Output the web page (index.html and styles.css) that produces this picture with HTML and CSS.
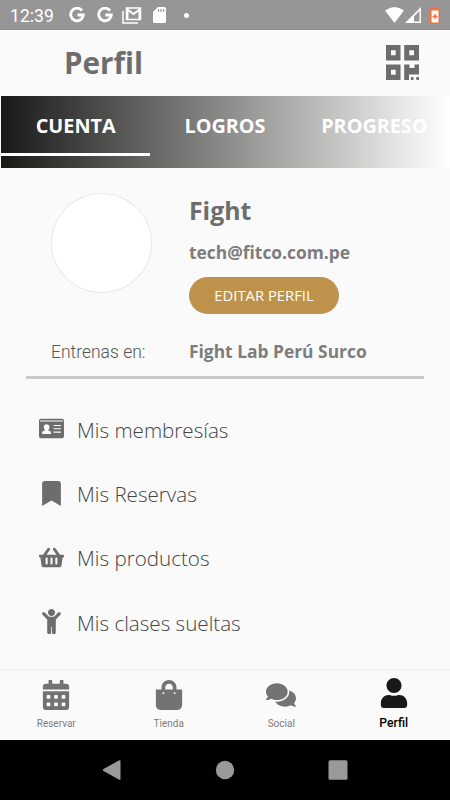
FILE: index.html
```html
<!DOCTYPE html>
<html lang="es">
<head>
	<meta charset="utf-8">
	<title>Perfil</title>
	<meta name="viewport" content="width=device-width, initial-scale=1">
	<link rel="stylesheet" href="styles.css">
</head>
<body>
	<div class="app">
		<div class="status">
			<span class="clock">12:39</span>
			<svg class="s_google" viewBox="0 0 16 16"><path d="M13 3.6A6.3 6.3 0 1 0 14.3 8H8.4" /></svg>
			<svg class="s_google" viewBox="0 0 16 16"><path d="M13 3.6A6.3 6.3 0 1 0 14.3 8H8.4" /></svg>
			<svg class="s_mail" viewBox="0 0 20 17">
				<path d="M1 4v12h15" />
				<path d="M4.500 1h14v11.500h-14z" />
				<path stroke-width="2" d="M5.500 12V2.500l6 4.500 6-4.500V12" />
			</svg>
			<svg class="s_card" viewBox="0 0 13 16"><path fill="#fff" d="M5 0h6.500Q13 0 13 1.500v13q0 1.500-1.500 1.500h-10Q0 16 0 14.500V5z" /><path stroke="#969696" stroke-width="1.200" d="M5.500 2v3M8 2v3M10.500 2v3" /></svg>
			<span class="s_dot"></span>
			<svg class="s_wifi" viewBox="0 0 19 16"><path fill="#fff" d="M0 3.500Q9.500-3.500 19 3.500L9.500 16z" /></svg>
			<svg class="s_signal" viewBox="0 0 16 16"><path fill="#fff" fill-rule="evenodd" d="M16 0v16H0zM14.500 4v10.500H9V9.300z" /></svg>
			<svg class="s_battery" viewBox="0 0 10 17"><path fill="#ff6b35" d="M3 0h4v1.500h3V17H0V1.500h3z" /><path fill="#fff" d="M1.500 3.500h7v12h-7z" /><path stroke="#ff6b35" stroke-width="1.500" d="M5 7v5M2.500 9.500h5" /></svg>
		</div>
		<div class="header">
			<h1>Perfil</h1>
			<svg class="qr" viewBox="0 0 33 35">
				<path fill-rule="evenodd" d="M0 0h14.500v15.500H0zM5 5.300v5h4.700v-5zM18.200 0H33v15.500H18.200zM23.300 5.300v5H28v-5zM0 19.500h14.500V35H0zM5 24.800v5h4.700v-5zM18.200 19.500h5.300v3.500h5v-3.500H33v10h-10V35h-4.800zM25 32h2.500v3H25zM30.300 32H33v3h-2.700z" />
			</svg>
		</div>
		<div class="tabs">
			<div class="tab active">CUENTA</div>
			<div class="tab">LOGROS</div>
			<div class="tab">PROGRESO</div>
		</div>
		<div class="profile">
			<div class="avatar"></div>
			<div class="info">
				<h2>Fight</h2>
				<p class="email">tech@fitco.com.pe</p>
				<button class="edit">EDITAR PERFIL</button>
			</div>
		</div>
		<div class="gym">
			<span class="gym_label">Entrenas en:</span>
			<span class="gym_name">Fight Lab Perú Surco</span>
		</div>
		<div class="menu">
			<div class="item">
				<svg viewBox="0 0 576 512"><path fill-rule="evenodd" d="M528 32H48C21.500 32 0 53.500 0 80v352c0 26.500 21.500 48 48 48h480c26.500 0 48-21.500 48-48V80c0-26.500-21.500-48-48-48zM24 72h528v22H24zM176 160c38 0 66 29 66 66 0 27-12 45-28 58v18c33 8 62 20 62 52v30H72v-30c0-32 29-44 64-52v-18c-16-13-26-31-26-58 0-37 28-66 66-66zM336 174h168v26H336zM336 250h168v26H336zM336 326h168v26H336z" /></svg>
				<span>Mis membresías</span>
			</div>
			<div class="item">
				<svg viewBox="0 0 384 512"><path d="M0 512V48C0 21.490 21.490 0 48 0h288c26.510 0 48 21.490 48 48v464L192 400 0 512z" /></svg>
				<span>Mis Reservas</span>
			</div>
			<div class="item">
				<svg viewBox="0 0 576 512"><path d="M576 216v16c0 13.255-10.745 24-24 24h-8l-26.113 182.788C514.509 462.435 494.257 480 470.370 480H105.630c-23.887 0-44.139-17.565-47.518-41.212L32 256h-8c-13.255 0-24-10.745-24-24v-16c0-13.255 10.745-24 24-24h67.341l106.780-146.821c10.395-14.292 30.407-17.453 44.701-7.058 14.293 10.395 17.453 30.408 7.058 44.701L170.477 192h235.046L326.120 82.821c-10.395-14.292-7.234-34.306 7.059-44.701 14.291-10.395 34.306-7.235 44.701 7.058L484.659 192H552c13.255 0 24 10.745 24 24zM312 392V280c0-13.255-10.745-24-24-24s-24 10.745-24 24v112c0 13.255 10.745 24 24 24s24-10.745 24-24zm112 0V280c0-13.255-10.745-24-24-24s-24 10.745-24 24v112c0 13.255 10.745 24 24 24s24-10.745 24-24zm-224 0V280c0-13.255-10.745-24-24-24s-24 10.745-24 24v112c0 13.255 10.745 24 24 24s24-10.745 24-24z" /></svg>
				<span>Mis productos</span>
			</div>
			<div class="item">
				<svg viewBox="0 0 384 512"><path d="M120 72c0-39.765 32.235-72 72-72s72 32.235 72 72c0 39.764-32.235 72-72 72s-72-32.236-72-72zm254.627 1.373c-12.496-12.497-32.758-12.497-45.254 0L242.745 160H141.254L54.627 73.373c-12.496-12.497-32.758-12.497-45.254 0-12.497 12.497-12.497 32.758 0 45.255L104 213.254V480c0 17.673 14.327 32 32 32h16c17.673 0 32-14.327 32-32V368h16v112c0 17.673 14.327 32 32 32h16c17.673 0 32-14.327 32-32V213.254l94.627-94.627c12.497-12.497 12.497-32.757 0-45.254z" /></svg>
				<span>Mis clases sueltas</span>
			</div>
		</div>
		<div class="navbar">
			<div class="nav">
				<svg viewBox="0 0 448 512"><path d="M0 464c0 26.500 21.500 48 48 48h352c26.500 0 48-21.500 48-48V192H0v272zm320-196c0-6.600 5.400-12 12-12h40c6.600 0 12 5.400 12 12v40c0 6.600-5.400 12-12 12h-40c-6.600 0-12-5.400-12-12v-40zm0 128c0-6.600 5.400-12 12-12h40c6.600 0 12 5.400 12 12v40c0 6.600-5.400 12-12 12h-40c-6.600 0-12-5.400-12-12v-40zM192 268c0-6.600 5.400-12 12-12h40c6.600 0 12 5.400 12 12v40c0 6.600-5.400 12-12 12h-40c-6.600 0-12-5.400-12-12v-40zm0 128c0-6.600 5.400-12 12-12h40c6.600 0 12 5.400 12 12v40c0 6.600-5.400 12-12 12h-40c-6.600 0-12-5.400-12-12v-40zM64 268c0-6.600 5.400-12 12-12h40c6.600 0 12 5.400 12 12v40c0 6.600-5.400 12-12 12H76c-6.600 0-12-5.400-12-12v-40zm0 128c0-6.600 5.400-12 12-12h40c6.600 0 12 5.400 12 12v40c0 6.600-5.400 12-12 12H76c-6.600 0-12-5.400-12-12v-40zM400 64h-48V16c0-8.800-7.200-16-16-16h-32c-8.800 0-16 7.200-16 16v48H160V16c0-8.800-7.200-16-16-16h-32c-8.800 0-16 7.200-16 16v48H48C21.500 64 0 85.500 0 112v48h448v-48c0-26.500-21.500-48-48-48z" /></svg>
				<span>Reservar</span>
			</div>
			<div class="nav">
				<svg viewBox="0 0 448 512"><path d="M352 160v-32C352 57.420 294.579 0 224 0 153.420 0 96 57.420 96 128v32H0v272c0 44.183 35.817 80 80 80h288c44.183 0 80-35.817 80-80V160h-96zm-192-32c0-35.290 28.710-64 64-64s64 28.710 64 64v32H160v-32zm160 112c-9 0-16-7-16-16s7-16 16-16 16 7 16 16-7 16-16 16zm-192 0c-9 0-16-7-16-16s7-16 16-16 16 7 16 16-7 16-16 16z" /></svg>
				<span>Tienda</span>
			</div>
			<div class="nav">
				<svg viewBox="0 0 576 512"><path d="M416 192c0-88.400-93.100-160-208-160S0 103.600 0 192c0 34.300 14.100 65.900 38 92-13.400 30.200-35.500 54.200-35.800 54.500-2.200 2.300-2.800 5.700-1.500 8.700S4.800 352 8 352c36.600 0 66.900-12.300 88.700-25 32.200 15.700 70.300 25 111.300 25 114.900 0 208-71.600 208-160zm122 220c23.900-26 38-57.700 38-92 0-66.900-53.500-124.200-129.300-148.100.9 6.600 1.300 13.300 1.300 20.100 0 105.900-107.700 192-240 192-10.800 0-21.300-.8-31.700-1.900C207.800 439.600 281.800 480 368 480c41 0 79.100-9.200 111.300-25 21.800 12.700 52.100 25 88.700 25 3.200 0 6.100-1.900 7.300-4.800 1.300-2.900.7-6.300-1.500-8.700-.3-.3-22.400-24.200-35.800-54.500z" /></svg>
				<span>Social</span>
			</div>
			<div class="nav current">
				<svg viewBox="0 0 448 512"><path d="M224 256c70.700 0 128-57.300 128-128S294.700 0 224 0 96 57.300 96 128s57.300 128 128 128zm89.600 32h-16.700c-22.200 10.200-46.900 16-72.900 16s-50.600-5.800-72.900-16h-16.700C60.200 288 0 348.200 0 422.400V464c0 26.500 21.500 48 48 48h352c26.500 0 48-21.500 48-48v-41.600c0-74.200-60.200-134.400-134.400-134.400z" /></svg>
				<span>Perfil</span>
			</div>
		</div>
		<div class="system">
			<svg viewBox="0 0 20 20"><path d="M17.500 1v18a.8.8 0 0 1-1.200.7L0 10.700a.8.8 0 0 1 0-1.400L16.300.3a.8.8 0 0 1 1.200.7z" /></svg>
			<svg viewBox="0 0 20 20"><circle cx="10" cy="10" r="9.200" /></svg>
			<svg viewBox="0 0 20 20"><rect x=".5" y=".3" width="19" height="19.500" rx="1.500" /></svg>
		</div>
	</div>
</body>
</html>
```

FILE: styles.css
```css
body {
	margin: 0;
	background: #fafafa;
	font-family: "Open Sans", sans-serif;
	color: #6d6d6d;
}
.app {
	display: flex;
	flex-direction: column;
	width: 450px;
	height: 800px;
	overflow: hidden;
}
.app svg {
	display: block;
	flex: none;
}
.status {
	display: flex;
	align-items: center;
	height: 30px;
	box-sizing: border-box;
	padding: 1px 10px 0;
	background: #969696;
	border-bottom: 1px solid #8a8a8a;
	color: #fff;
}
.clock {
	width: 59px;
	font: 17.6px/30px Roboto, sans-serif;
	padding-top: 1px;
}
.s_google {
	width: 16px;
	height: 16px;
	margin-right: 11.5px;
	fill: none;
	stroke: #fff;
	stroke-width: 2.8;
}
.s_mail {
	width: 20px;
	height: 17px;
	margin: 0 11px 0 -2px;
	fill: none;
	stroke: #fff;
	stroke-width: 1.5;
}
.s_card {
	width: 13px;
	height: 16px;
}
.s_dot {
	width: 5px;
	height: 5px;
	margin-left: 18px;
	border-radius: 50%;
	background: #fff;
}
.s_wifi {
	width: 19px;
	height: 16px;
	margin-left: auto;
}
.s_signal {
	width: 16px;
	height: 16px;
	margin: 0 9px 0 1px;
}
.s_battery {
	width: 10px;
	height: 17px;
}
.header {
	display: flex;
	align-items: center;
	justify-content: space-between;
	height: 66px;
	box-sizing: border-box;
	padding: 0 31px 1px 64px;
}
.header h1 {
	margin: 0;
	font-size: 29.6px;
	line-height: 66px;
}
.qr {
	width: 33px;
	height: 35px;
	fill: #6d6d6d;
}
.tabs {
	display: flex;
	height: 72px;
	margin: 0 1px;
	background: linear-gradient(to right, #191917, #8b8b89 50%, #fff);
}
.tab {
	flex: 1;
	height: 60px;
	box-sizing: border-box;
	border-bottom: 3px solid transparent;
	color: #fff;
	font-size: 19.8px;
	font-weight: bold;
	line-height: 60px;
	text-align: center;
}
.active {
	border-color: #fff;
}
.profile {
	display: flex;
	height: 146px;
	box-sizing: border-box;
	padding: 25px 51px 0;
}
.avatar {
	width: 101px;
	height: 100px;
	box-sizing: border-box;
	margin-right: 37px;
	border: 1px solid #e8e8e8;
	border-radius: 50%;
	background: #fff;
}
.info h2 {
	margin: 0;
	font-size: 24.8px;
	line-height: 35px;
}
.email {
	margin: 10px 0 11px;
	color: #7d7d7d;
	font-size: 17.4px;
	font-weight: bold;
	line-height: 28px;
}
.edit {
	display: block;
	width: 150px;
	height: 37px;
	padding: 0;
	border: 0;
	border-radius: 19px;
	background: #be924a;
	color: #fff;
	font: 14.8px/37px "Open Sans", sans-serif;
}
.gym {
	display: flex;
	align-items: center;
	height: 65px;
	box-sizing: border-box;
	margin: 0 26px;
	padding: 12px 0 0 25px;
	border-bottom: 3px solid #c8c8c8;
}
.gym_label {
	width: 138px;
	padding-top: 2px;
	color: #555;
	font: 300 17.5px/24px Roboto, sans-serif;
}
.gym_name {
	color: #7d7d7d;
	font-size: 17.4px;
	font-weight: bold;
}
.menu {
	flex: 1;
	padding-top: 18.5px;
}
.item {
	display: flex;
	align-items: center;
	height: 64.4px;
	color: #444;
	font-size: 20.6px;
	font-weight: 300;
}
.item svg {
	width: 25px;
	height: 25px;
	margin: 0 13px 2px 39px;
	fill: #6d6d6d;
}
.navbar {
	display: flex;
	height: 70px;
	border-top: 1px solid #eee;
}
.nav {
	flex: 1;
	display: flex;
	flex-direction: column;
	align-items: center;
	padding-top: 10px;
	color: #7d7d7d;
	font: 10px/12px Roboto, sans-serif;
}
.nav svg {
	width: 30px;
	height: 30px;
	margin-bottom: 8px;
	fill: #737373;
}
.current {
	padding-top: 8px;
	color: #000;
	font-size: 12.2px;
	font-weight: 500;
}
.current svg {
	margin-bottom: 9px;
	fill: #191917;
}
.system {
	display: flex;
	align-items: center;
	justify-content: center;
	gap: 92.5px;
	height: 60px;
	background: #000;
}
.system svg {
	width: 20px;
	height: 20px;
	fill: #999;
}
```
